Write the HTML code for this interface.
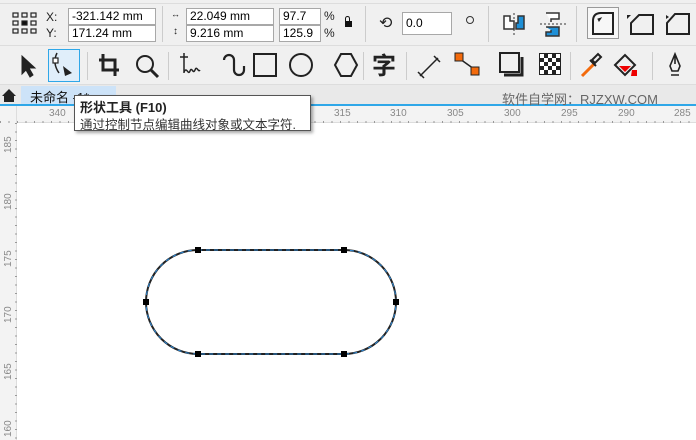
<!DOCTYPE html>
<html><head><meta charset="utf-8"><style>
*{margin:0;padding:0;box-sizing:border-box}
body{width:696px;height:440px;overflow:hidden;background:#f0f0f0;font-family:"Liberation Sans","Noto Sans CJK SC",sans-serif;position:relative}
.a{position:absolute}
.in{position:absolute;background:#fff;border:1px solid #a8a8a8;font-size:12px;line-height:15px;padding-left:3px;color:#000;height:17px}
.t{position:absolute;font-size:12px;color:#222}
</style></head><body>
<div class="a" style="left:0;top:3px;width:696px;height:1px;background:#ddd"></div>
<svg class="a" style="left:12px;top:12px" width="26" height="22" viewBox="0 0 26 22" fill="none" stroke="#222" stroke-width="1.2">
<rect x="1" y="1" width="5" height="4"/><rect x="10" y="1" width="5" height="4"/><rect x="19" y="1" width="5" height="4"/>
<rect x="1" y="9" width="5" height="4"/><rect x="10" y="9" width="5" height="4" fill="#111"/><rect x="19" y="9" width="5" height="4"/>
<rect x="1" y="17" width="5" height="4"/><rect x="10" y="17" width="5" height="4"/><rect x="19" y="17" width="5" height="4"/></svg>
<div class="t" style="left:46px;top:10px">X:</div><div class="t" style="left:46px;top:26px">Y:</div>
<div class="in" style="left:68px;top:8px;width:88px">-321.142 mm</div>
<div class="in" style="left:68px;top:25px;width:88px">171.24 mm</div>
<div class="a" style="left:162px;top:6px;width:1px;height:36px;background:#ccc"></div>
<div class="t" style="left:171px;top:9px;font-size:9px">↔</div><div class="t" style="left:173px;top:26px;font-size:10px">↕</div>
<div class="in" style="left:186px;top:8px;width:88px">22.049 mm</div>
<div class="in" style="left:186px;top:25px;width:88px">9.216 mm</div>
<div class="in" style="left:279px;top:8px;width:42px">97.7</div>
<div class="in" style="left:279px;top:25px;width:42px">125.9</div>
<div class="t" style="left:324px;top:9px">%</div><div class="t" style="left:324px;top:26px">%</div>
<div class="a" style="left:345px;top:21px;width:7px;height:6px;background:#111"></div>
<div class="a" style="left:345px;top:16px;width:5px;height:6px;border:1.5px solid #111;border-bottom:0;border-radius:3px 3px 0 0"></div>
<div class="a" style="left:365px;top:6px;width:1px;height:36px;background:#ccc"></div>
<div class="t" style="left:379px;top:13px;font-size:16px">⟲</div>
<div class="in" style="left:402px;top:12px;width:50px;height:23px;line-height:20px">0.0</div>
<div class="a" style="left:466px;top:16px;width:8px;height:8px;border:1.3px solid #333;border-radius:50%"></div>
<div class="a" style="left:488px;top:6px;width:1px;height:36px;background:#ccc"></div>
<svg class="a" style="left:500px;top:10px" width="28" height="28"><path d="M4 6h6v5h4v8H4z" fill="#fff" stroke="#333" stroke-width="1.5"/><path d="M14 3v24" stroke="#333" stroke-dasharray="2 2"/><path d="M18 6h6v13h-8v-6h2z" fill="#1e8fd6" stroke="#333" stroke-width="1.5"/></svg>
<svg class="a" style="left:538px;top:10px" width="30" height="28"><path d="M8 3h13v6h-8v3" fill="#fff" stroke="#333" stroke-width="1.5"/><path d="M2 14h26" stroke="#333" stroke-dasharray="2 2"/><path d="M8 17h13v9H8v-4h5v-2" fill="#1e8fd6" stroke="#333" stroke-width="1.5"/></svg>
<div class="a" style="left:576px;top:6px;width:1px;height:36px;background:#ccc"></div>
<div class="a" style="left:587px;top:7px;width:32px;height:32px;border:1px solid #999;background:#f7f7f7"></div>
<svg class="a" style="left:590px;top:10px" width="100" height="26" fill="none" stroke="#222" stroke-width="2"><path d="M3 24V11Q3 3 11 3h12v21z"/><path d="M8 9l3-1-2 3z" fill="#222" stroke-width="1"/><path d="M41 24V13l8-8h14v19z"/><path d="M37 5l4 0-4 4z" fill="#222" stroke="none"/><path d="M77 24V13l8-9h14v20z"/><path d="M76 5l3 2-3 2z" fill="#222" stroke="none"/></svg>
<div class="a" style="left:0;top:45px;width:696px;height:1px;background:#ddd"></div>
<div class="a" style="left:48px;top:49px;width:32px;height:33px;border:1px solid #2fa7e8;background:#e0eefa"></div>
<svg class="a" style="left:0;top:48px" width="696" height="36" fill="none" stroke="#222" stroke-width="2">
<path d="M22 8v18l4-4 4 7 3-2-4-7h6z" fill="#222" stroke-width="1"/>
<path d="M57 5q-5 10 2 20" stroke-width="1.5"/><rect x="53" y="10" width="5" height="5" fill="#fff" stroke-width="1.2"/><path d="M63 18l9 7-7 3z" fill="#222" stroke="none"/>
<path d="M103 6v16h16M99 12h16v16" stroke-width="3"/>
<circle cx="145" cy="16" r="8"/><path d="M151 22l7 7" stroke-width="3"/>
<path d="M184 5v8M180 9h8M184 13v12M184 24c3-6 4 4 6-1s3 4 5-1 3 3 5 0" stroke-width="1.5"/>
<path d="M224 12a5 5 0 0 1 10 0v10a5 5 0 0 0 10 0v-4" stroke-width="2.2"/>
<rect x="254" y="6" width="22" height="22"/><circle cx="301" cy="17" r="11"/><path d="M335 17l6-11h10l6 11-6 11h-10z"/>
<path d="M420 28l18-18M418 24l6 6M434 8l6 6" stroke-width="1.5"/><path d="M460 11l14 10" stroke-width="1.5"/>
<rect x="455" y="5" width="8" height="8" fill="#f36a0c" stroke-width="1"/><rect x="471" y="19" width="8" height="8" fill="#f36a0c" stroke-width="1"/>
<rect x="500" y="5" width="19" height="19"/><path d="M522 9v18H504" stroke-width="3"/>
<path d="M582 28l12-12" stroke="#f36a0c" stroke-width="3"/><path d="M592 12l6-6 3 3-6 6zM590 12l6 6" stroke-width="2"/>
<path d="M615 17l10-10 10 10-10 10z"/><path d="M619 18h12l-6 6z" fill="#e00" stroke="none"/><path d="M632 22l5 0 0 6-6 0z" fill="#e00" stroke="none"/>
<path d="M670 18l5-12 5 12-2 5h-6z M675 6v10M671 27h8" stroke-width="1.6"/>
</svg>
<div class="a" style="left:539px;top:53px;width:22px;height:22px;background:repeating-conic-gradient(#222 0 25%,#fff 0 50%) 0 0/8px 8px;border:1px solid #222"></div>
<div class="a" style="left:372px;top:50px;font-size:24px;font-weight:bold;color:#222;font-family:'Noto Sans CJK SC',sans-serif;line-height:28px">字</div>
<div class="a" style="left:87px;top:52px;width:1px;height:28px;background:#ccc"></div>
<div class="a" style="left:168px;top:52px;width:1px;height:28px;background:#ccc"></div>
<div class="a" style="left:363px;top:52px;width:1px;height:28px;background:#ccc"></div>
<div class="a" style="left:406px;top:52px;width:1px;height:28px;background:#ccc"></div>
<div class="a" style="left:570px;top:52px;width:1px;height:28px;background:#ccc"></div>
<div class="a" style="left:652px;top:52px;width:1px;height:28px;background:#ccc"></div>
<div class="a" style="left:0;top:84px;width:696px;height:1px;background:#ddd"></div>
<div class="a" style="left:0;top:85px;width:696px;height:20px;background:#e9e9e9"></div>
<svg class="a" style="left:1px;top:88px" width="16" height="15"><path d="M1 8L8 1l7 7h-2v6H3V8z" fill="#222"/></svg>
<div class="a" style="left:21px;top:86px;width:95px;height:19px;background:#cde3f8"></div>
<div class="t" style="left:30px;top:87px;font-size:13px;color:#111">未命名 -1*</div>
<div class="a" style="left:0;top:104px;width:696px;height:2px;background:#2fa7e8"></div>
<div class="t" style="left:502px;top:89px;font-size:13px;color:#666">软件自学网：RJZXW.COM</div>
<div class="a" style="left:0;top:106px;width:696px;height:17px;background:#f3f3f3;border-bottom:1px solid #ddd"></div>
<div class="a" style="left:0;top:106px;width:17px;height:334px;background:#f3f3f3;border-right:1px solid #ddd"></div>
<div class="a" style="left:17px;top:123px;width:679px;height:317px;background:#fff"></div>
<div class="a" style="left:0;top:121px;width:696px;height:2px;background:repeating-linear-gradient(90deg,#999 0 1px,transparent 1px 8.5px)"></div>
<div class="a" style="left:15px;top:123px;width:2px;height:317px;background:repeating-linear-gradient(180deg,#999 0 1px,transparent 1px 8.5px)"></div>
<div class="t" style="left:49px;top:108px;font-size:10px;color:#888">340</div>
<div class="t" style="left:334px;top:108px;font-size:10px;color:#888">315</div>
<div class="t" style="left:390px;top:108px;font-size:10px;color:#888">310</div>
<div class="t" style="left:447px;top:108px;font-size:10px;color:#888">305</div>
<div class="t" style="left:504px;top:108px;font-size:10px;color:#888">300</div>
<div class="t" style="left:561px;top:108px;font-size:10px;color:#888">295</div>
<div class="t" style="left:618px;top:108px;font-size:10px;color:#888">290</div>
<div class="t" style="left:674px;top:108px;font-size:10px;color:#888">285</div>
<div class="a" style="font-size:10px;color:#888;transform:rotate(-90deg);transform-origin:0 0;top:153px;left:3px">185</div>
<div class="a" style="font-size:10px;color:#888;transform:rotate(-90deg);transform-origin:0 0;top:210px;left:3px">180</div>
<div class="a" style="font-size:10px;color:#888;transform:rotate(-90deg);transform-origin:0 0;top:267px;left:3px">175</div>
<div class="a" style="font-size:10px;color:#888;transform:rotate(-90deg);transform-origin:0 0;top:323px;left:3px">170</div>
<div class="a" style="font-size:10px;color:#888;transform:rotate(-90deg);transform-origin:0 0;top:380px;left:3px">165</div>
<div class="a" style="font-size:10px;color:#888;transform:rotate(-90deg);transform-origin:0 0;top:437px;left:3px">160</div>
<svg class="a" style="left:0;top:0" width="696" height="440">
<path d="M198 250H344A52 52 0 0 1 344 354H198A52 52 0 0 1 198 250Z" fill="none" stroke="#222" stroke-width="2"/>
<path d="M198 250H344A52 52 0 0 1 344 354H198A52 52 0 0 1 198 250Z" fill="none" stroke="#2e8ad8" stroke-width="1" stroke-dasharray="4 4"/>
<g fill="#000"><rect x="195" y="247" width="6" height="6"/><rect x="341" y="247" width="6" height="6"/><rect x="143" y="299" width="6" height="6"/><rect x="393" y="299" width="6" height="6"/><rect x="195" y="351" width="6" height="6"/><rect x="341" y="351" width="6" height="6"/></g>
</svg>
<div class="a" style="left:74px;top:95px;width:237px;height:36px;background:#fff;border:1px solid #555;box-shadow:2px 2px 3px rgba(0,0,0,.35)"></div>
<div class="t" style="left:80px;top:97px;font-size:13px;font-weight:bold;color:#222">形状工具 (F10)</div>
<div class="t" style="left:80px;top:114px;font-size:12.5px;color:#333">通过控制节点编辑曲线对象或文本字符.</div>
</body></html>
